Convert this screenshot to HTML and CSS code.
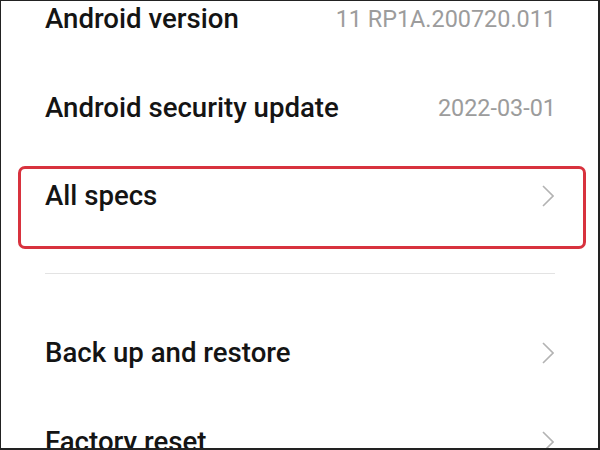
FILE: index.html
```html
<!DOCTYPE html>
<html>
<head>
<meta charset="utf-8">
<link rel="stylesheet" href="styles.css">
</head>
<body>
<div class="frame">
  <div class="list">
    <div class="row first">
      <span class="title">Android version</span>
      <span class="value">11 RP1A.200720.011</span>
    </div>
    <div class="row">
      <span class="title">Android security update</span>
      <span class="value">2022-03-01</span>
    </div>
    <div class="row highlight">
      <span class="title">All specs</span>
      <svg class="chev" width="12" height="22" viewBox="0 0 12 22"><polyline points="1,1 11,11 1,21" fill="none" stroke="#b3b3b3" stroke-width="1.6"/></svg>
    </div>
    <div class="divider"></div>
    <div class="row backup">
      <span class="title">Back up and restore</span>
      <svg class="chev" width="12" height="22" viewBox="0 0 12 22"><polyline points="1,1 11,11 1,21" fill="none" stroke="#b3b3b3" stroke-width="1.6"/></svg>
    </div>
    <div class="row">
      <span class="title">Factory reset</span>
      <svg class="chev" width="12" height="22" viewBox="0 0 12 22"><polyline points="1,1 11,11 1,21" fill="none" stroke="#b3b3b3" stroke-width="1.6"/></svg>
    </div>
  </div>
</div>
</body>
</html>
```

FILE: styles.css
```css
html, body {
  margin: 0;
  padding: 0;
  background: #fff;
}
.frame {
  width: 600px;
  height: 450px;
  box-sizing: border-box;
  border-style: solid;
  border-color: #222;
  border-width: 1px 2px 2px 1px;
  overflow: hidden;
  background: #fff;
  font-family: Roboto, "Liberation Sans", sans-serif;
}
.list {
  display: flex;
  flex-direction: column;
}
.row {
  display: flex;
  align-items: center;
  justify-content: space-between;
  height: 89px;
  flex: none;
  padding: 0 44px 0 44px;
}
.row.first {
  margin-top: -27px;
}
.title {
  font-size: 27.6px;
  font-weight: 500;
  line-height: 32px;
  color: #141414;
}
.value {
  font-size: 23.4px;
  line-height: 32px;
  color: #9c9c9c;
  margin-right: -2px;
}
.chev {
  display: block;
}
.row.highlight {
  height: 83px;
  box-sizing: border-box;
  margin: 14px 12px 0 17px;
  border: 3px solid #d8323e;
  border-radius: 7px;
  padding: 11px 29px 0 24px;
  align-items: flex-start;
}
.row.highlight .chev {
  margin-top: 5px;
}
.divider {
  height: 1px;
  background: #e3e3e3;
  margin: 24px 43px 0 44px;
}
.row.backup {
  margin-top: 34px;
}
```
